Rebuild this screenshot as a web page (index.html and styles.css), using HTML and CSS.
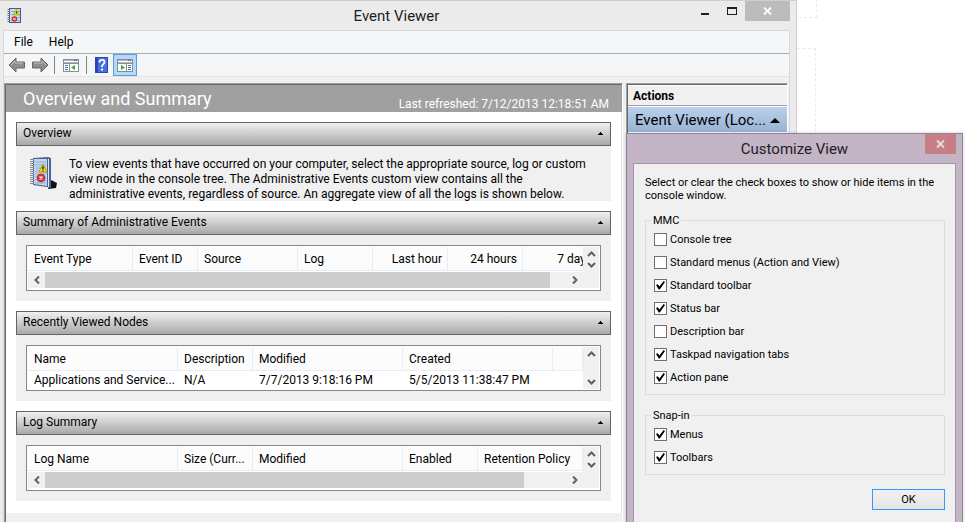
FILE: index.html
```html
<!DOCTYPE html>
<html lang="en">
<head>
    <meta charset="UTF-8">
    <meta name="viewport" content="width=device-width, initial-scale=1.0">
    <title>Event Viewer</title>
    <link rel="stylesheet" href="styles.css">
</head>
<body>
    <!-- Shared icons -->
    <svg class="sprite" aria-hidden="true">
        <symbol id="collapse" viewBox="0 0 7 4"><path d="M3 0h1v1h1v1h1v1H1V2h1V1h1z"/></symbol>
        <symbol id="up" viewBox="0 0 9 6"><path d="M1 5l3.500-3.500L8 5" fill="none" stroke="#606060" stroke-width="2"/></symbol>
        <symbol id="down" viewBox="0 0 9 6"><path d="M1 1l3.500 3.500L8 1" fill="none" stroke="#606060" stroke-width="2"/></symbol>
        <symbol id="left" viewBox="0 0 6 8"><path d="M5 .5L1.500 4 5 7.500" fill="none" stroke="#606060" stroke-width="2"/></symbol>
        <symbol id="right" viewBox="0 0 6 8"><path d="M1 .5L4.500 4 1 7.500" fill="none" stroke="#606060" stroke-width="2"/></symbol>
        <symbol id="close" viewBox="0 0 9 8"><path d="M1 .5l7 7M8 .5l-7 7" fill="none" stroke="currentColor" stroke-width="1.800"/></symbol>
    </svg>

    <div class="desktop">
        <div class="backdrop-box"></div>
        <div class="backdrop-box backdrop-tall"></div>

        <!-- Event Viewer window -->
        <div class="window">
            <div class="title-bar">
                <svg class="app-icon" width="16" height="16" viewBox="0 0 16 16">
                    <rect x="2.500" y=".5" width="11" height="14" fill="#c3dcf5" stroke="#3d5a8c"/>
                    <path d="M4 3.500h9M4 6.500h9M4 9.500h9M4 12.500h9" stroke="#8fb0da"/>
                    <path d="M1.500 1v14" stroke="#777" stroke-width="2" stroke-dasharray="1 1"/>
                    <path d="M9.500 1.500l3 5.500h-6z" fill="#f5d90a" stroke="#a89500" stroke-width=".7"/>
                    <path d="M9.500 3.500v2" stroke="#222"/>
                    <circle cx="7.500" cy="11" r="2.800" fill="#d9302c"/>
                    <path d="M6.500 10l2 2m0-2l-2 2" stroke="#fff" stroke-width=".9"/>
                </svg>
                <h1 class="window-title">Event Viewer</h1>
                <div class="window-controls">
                    <button class="control" aria-label="Minimize"><svg width="8" height="8"><path d="M0 6h8v2H0z" fill="#1e1e1e"/></svg></button>
                    <button class="control" aria-label="Maximize"><svg width="10" height="8"><path d="M0 0h10v8H0zM1 2v5h8V2z" fill="#1e1e1e" fill-rule="evenodd"/></svg></button>
                    <button class="control control-close" aria-label="Close"><svg width="9" height="8"><use href="#close"/></svg></button>
                </div>
            </div>

            <div class="client">
                <div class="menu-bar">
                    <button class="menu-item">File</button>
                    <button class="menu-item">Help</button>
                </div>
                <div class="toolbar">
                    <button class="tool" aria-label="Back">
                        <svg width="18" height="16" viewBox="0 0 18 16"><path d="M1 8l7-7v4h8.500v6H8v4z" fill="#8e8e8e" stroke="#666"/><path d="M3 8l4-4v2h8" fill="none" stroke="#bdbdbd"/></svg>
                    </button>
                    <button class="tool" aria-label="Forward">
                        <svg width="18" height="16" viewBox="0 0 18 16"><path d="M17 8l-7-7v4H1.500v6H10v4z" fill="#8e8e8e" stroke="#666"/><path d="M3 6h8V4l4 4" fill="none" stroke="#bdbdbd"/></svg>
                    </button>
                    <span class="separator"></span>
                    <button class="tool tool-wide" aria-label="Show console tree">
                        <svg width="16" height="13" viewBox="0 0 16 13">
                            <rect x=".5" y=".5" width="15" height="12" fill="#fff" stroke="#878c96"/>
                            <path d="M1 1.500h14M1 3.500h14" stroke="#b4b9c1"/>
                            <path d="M11 1.500h1m1 0h1" stroke="#4d5562"/>
                            <path d="M1 4.500h14M6.500 5v8" stroke="#878c96"/>
                            <path d="M2 6.500h3M2 8.500h3M2 10.500h3" stroke="#4b6fa8"/>
                            <path d="M12 6v5L8 8.500z" fill="#35b51c"/>
                        </svg>
                    </button>
                    <span class="separator"></span>
                    <button class="tool tool-wide" aria-label="Help">
                        <svg width="13" height="16" viewBox="0 0 13 16">
                            <rect width="13" height="16" fill="#2846b4"/>
                            <rect x="3" y="1" width="9" height="14" fill="#4a6fe0"/>
                            <path d="M4.500 5.500V4.500Q5 2.800 7 2.800 9.500 2.800 9.500 5 9.500 6.500 8 7.400 7 8 7 10" fill="none" stroke="#fff" stroke-width="1.800"/>
                            <path d="M6 11.500h2v2H6z" fill="#fff"/>
                        </svg>
                    </button>
                    <button class="tool tool-active" aria-label="Show action pane" aria-pressed="true">
                        <svg width="16" height="13" viewBox="0 0 16 13">
                            <rect x=".5" y=".5" width="15" height="12" fill="#fff" stroke="#878c96"/>
                            <path d="M1 1.500h14M1 3.500h14" stroke="#b4b9c1"/>
                            <path d="M11 1.500h1m1 0h1" stroke="#4d5562"/>
                            <path d="M1 4.500h14M9.500 5v8" stroke="#878c96"/>
                            <path d="M11 6.500h3M11 8.500h3M11 10.500h3" stroke="#4b6fa8"/>
                            <path d="M4 6v5l4-2.500z" fill="#35b51c"/>
                        </svg>
                    </button>
                </div>

                <div class="panes">
                    <main class="pane summary-pane">
                        <div class="summary-header">
                            <h2 class="summary-title">Overview and Summary</h2>
                            <span class="refreshed">Last refreshed: 7/12/2013 12:18:51 AM</span>
                        </div>
                        <div class="sections">
                            <section class="section">
                                <div class="section-header">
                                    <h3 class="section-title">Overview</h3>
                                    <button class="collapse" aria-label="Collapse Overview"><svg width="7" height="4"><use href="#collapse"/></svg></button>
                                </div>
                                <div class="overview">
                                    <svg class="overview-icon" width="28" height="32" viewBox="0 0 28 32">
                                        <path d="M21 23l6 3-1 5-8 1z" fill="#111"/>
                                        <path d="M3 1l15-1 3 1v30l-4-1L3 28z" fill="#4b6597"/>
                                        <path d="M4 2h13v27L4 27z" fill="#bed6ef"/>
                                        <path d="M5 5h11M5 8h11M5 11h11M5 14h11M5 17h11M5 20h11M5 23h11M5 26h11" stroke="#8facd3"/>
                                        <path d="M18.500 2v28" stroke="#dce8f5"/>
                                        <path d="M2 2v26" stroke="#888" stroke-width="4" stroke-dasharray="1 1"/>
                                        <path d="M13 7l4 8H9z" fill="#ffe11a" stroke="#b39c00"/>
                                        <path d="M13 9.500v3m0 1v1" stroke="#111" stroke-width="1.400"/>
                                        <circle cx="11" cy="21" r="4" fill="#d92f35" stroke="#a51d22" stroke-width=".5"/>
                                        <path d="M9.500 19.500l3 3m0-3l-3 3" stroke="#fff" stroke-width="1.300"/>
                                    </svg>
                                    <p class="overview-text">To view events that have occurred on your computer, select the appropriate source, log or custom<br>view node in the console tree. The Administrative Events custom view contains all the<br>administrative events, regardless of source. An aggregate view of all the logs is shown below.</p>
                                </div>
                            </section>

                            <section class="section">
                                <div class="section-header">
                                    <h3 class="section-title">Summary of Administrative Events</h3>
                                    <button class="collapse" aria-label="Collapse Summary"><svg width="7" height="4"><use href="#collapse"/></svg></button>
                                </div>
                                <div class="section-body">
                                    <div class="list-view">
                                        <div class="list-rows">
                                            <table class="list">
                                                <colgroup><col class="col-type"><col class="col-id"><col class="col-source"><col class="col-small"><col class="col-small"><col class="col-small"><col class="col-small"></colgroup>
                                                <thead><tr><th>Event Type</th><th>Event ID</th><th>Source</th><th>Log</th><th class="number">Last hour</th><th class="number">24 hours</th><th class="number">7 days</th></tr></thead>
                                            </table>
                                        </div>
                                        <div class="scroll-y">
                                            <button class="arrow" aria-label="Scroll up"><svg width="9" height="6"><use href="#up"/></svg></button>
                                            <button class="arrow" aria-label="Scroll down"><svg width="9" height="6"><use href="#down"/></svg></button>
                                        </div>
                                        <div class="scroll-x">
                                            <button class="arrow" aria-label="Scroll left"><svg width="6" height="8"><use href="#left"/></svg></button>
                                            <div class="track"><div class="thumb thumb-events"></div></div>
                                            <button class="arrow" aria-label="Scroll right"><svg width="6" height="8"><use href="#right"/></svg></button>
                                        </div>
                                    </div>
                                </div>
                            </section>

                            <section class="section">
                                <div class="section-header">
                                    <h3 class="section-title">Recently Viewed Nodes</h3>
                                    <button class="collapse" aria-label="Collapse Recently Viewed Nodes"><svg width="7" height="4"><use href="#collapse"/></svg></button>
                                </div>
                                <div class="section-body">
                                    <div class="list-view">
                                        <div class="list-rows">
                                            <table class="list">
                                                <colgroup><col class="col-large"><col class="col-small"><col class="col-large"><col class="col-large"><col></colgroup>
                                                <thead><tr><th>Name</th><th>Description</th><th>Modified</th><th>Created</th><th></th></tr></thead>
                                                <tbody><tr><td>Applications and Service...</td><td>N/A</td><td>7/7/2013 9:18:16 PM</td><td>5/5/2013 11:38:47 PM</td><td></td></tr></tbody>
                                            </table>
                                        </div>
                                        <div class="scroll-y">
                                            <button class="arrow" aria-label="Scroll up"><svg width="9" height="6"><use href="#up"/></svg></button>
                                            <button class="arrow" aria-label="Scroll down"><svg width="9" height="6"><use href="#down"/></svg></button>
                                        </div>
                                    </div>
                                </div>
                            </section>

                            <section class="section">
                                <div class="section-header">
                                    <h3 class="section-title">Log Summary</h3>
                                    <button class="collapse" aria-label="Collapse Log Summary"><svg width="7" height="4"><use href="#collapse"/></svg></button>
                                </div>
                                <div class="section-body">
                                    <div class="list-view">
                                        <div class="list-rows">
                                            <table class="list">
                                                <colgroup><col class="col-large"><col class="col-small"><col class="col-large"><col class="col-small"><col></colgroup>
                                                <thead><tr><th>Log Name</th><th>Size (Curr...</th><th>Modified</th><th>Enabled</th><th>Retention Policy</th></tr></thead>
                                            </table>
                                        </div>
                                        <div class="scroll-y">
                                            <button class="arrow" aria-label="Scroll up"><svg width="9" height="6"><use href="#up"/></svg></button>
                                            <button class="arrow" aria-label="Scroll down"><svg width="9" height="6"><use href="#down"/></svg></button>
                                        </div>
                                        <div class="scroll-x">
                                            <button class="arrow" aria-label="Scroll left"><svg width="6" height="8"><use href="#left"/></svg></button>
                                            <div class="track"><div class="thumb thumb-logs"></div></div>
                                            <button class="arrow" aria-label="Scroll right"><svg width="6" height="8"><use href="#right"/></svg></button>
                                        </div>
                                    </div>
                                </div>
                            </section>
                        </div>
                    </main>

                    <aside class="pane actions-pane">
                        <h2 class="actions-title">Actions</h2>
                        <button class="actions-group">
                            <span class="actions-name">Event Viewer (Loc...</span>
                            <svg width="10" height="5"><path d="M5 0l5 5H0z"/></svg>
                        </button>
                    </aside>
                </div>
            </div>
        </div>

        <!-- Customize View dialog -->
        <div class="dialog" role="dialog" aria-labelledby="dialogTitle">
            <div class="dialog-bar">
                <h2 class="window-title" id="dialogTitle">Customize View</h2>
                <button class="dialog-close" aria-label="Close"><svg width="9" height="8"><use href="#close"/></svg></button>
            </div>
            <form class="dialog-body">
                <p class="dialog-text">Select or clear the check boxes to show or hide items in the<br>console window.</p>
                <fieldset class="group">
                    <legend>MMC</legend>
                    <label class="option"><input type="checkbox">Console tree</label>
                    <label class="option"><input type="checkbox">Standard menus (Action and View)</label>
                    <label class="option"><input type="checkbox" checked>Standard toolbar</label>
                    <label class="option"><input type="checkbox" checked>Status bar</label>
                    <label class="option"><input type="checkbox">Description bar</label>
                    <label class="option"><input type="checkbox" checked>Taskpad navigation tabs</label>
                    <label class="option"><input type="checkbox" checked>Action pane</label>
                </fieldset>
                <fieldset class="group">
                    <legend>Snap-in</legend>
                    <label class="option"><input type="checkbox" checked>Menus</label>
                    <label class="option"><input type="checkbox" checked>Toolbars</label>
                </fieldset>
                <button type="button" class="ok-button">OK</button>
            </form>
        </div>
    </div>
</body>
</html>
```

FILE: styles.css
```css
* {
    box-sizing: border-box;
}

body {
    margin: 0;
    background-color: white;
    color: black;
    font-family: Roboto, "Open Sans", sans-serif;
    font-size: 12px;
    line-height: 15px;
}

h1, h2, h3, p {
    margin: 0;
    font-size: inherit;
    font-weight: normal;
}

button {
    padding: 0;
    border: none;
    background: none;
    color: inherit;
    font: inherit;
}

svg {
    display: block;
    flex: none;
}

.sprite {
    position: absolute;
    width: 0;
    height: 0;
}

.desktop {
    position: relative;
    height: 100vh;
    overflow: hidden;
}

/* Faint dashed outlines behind the windows */
.backdrop-box {
    position: absolute;
    top: -1px;
    right: 148px;
    width: 60px;
    height: 19px;
    border: 1px dashed #ebebeb;
}

.backdrop-tall {
    top: 48px;
    right: 149px;
    height: 200px;
}

/* Main window */
.window {
    position: absolute;
    top: 0;
    bottom: 0;
    left: 0;
    right: 168px;
    display: flex;
    flex-direction: column;
    padding: 0 6px 0 3px;
    border-top: 1px solid #cfcfcf;
    border-right: 1px solid #cfcfcf;
    background-color: #ebebeb;
}

.title-bar {
    display: grid;
    grid-template-columns: 100px 1fr 100px;
    height: 29px;
}

.app-icon {
    margin: 7px 0 0 4px;
}

.window-title {
    color: #1e1e1e;
    font-size: 15px;
    line-height: 31px;
    text-align: center;
}

.window-controls {
    display: flex;
    justify-content: flex-end;
    height: 20px;
}

.control {
    display: flex;
    flex: 0 0 27px;
    align-items: center;
    justify-content: center;
}

.control-close {
    flex-basis: 45px;
    background-color: #bcbcbc;
    color: white;
}

.client {
    display: flex;
    flex: 1;
    flex-direction: column;
    border: 1px solid #d9d9d9;
    border-bottom: none;
    background-color: #f0f0f0;
}

.menu-bar {
    display: flex;
    gap: 16px;
    height: 23px;
    padding: 0 10px;
    border-bottom: 1px solid #a9adb0;
    background-color: #f5f6f7;
}

.toolbar {
    display: flex;
    align-items: center;
    gap: 5px;
    height: 23px;
    padding: 0 4px;
    border-bottom: 1px solid #e3e3e3;
    background-color: #f5f6f7;
}

.tool-wide {
    padding: 0 2px 0 3px;
}

.tool-active {
    padding: 4px 3px 3px;
    border: 1px solid #569de5;
    background-color: #b8d8f9;
}

.tool-wide + .tool-active {
    margin-left: -2px;
}

.separator {
    width: 1px;
    height: 18px;
    background-color: #858585;
}

.panes {
    display: flex;
    flex: 1;
    gap: 3px;
    padding: 6px 1px 0 0;
}

.pane {
    border-top: 1px solid #a0a0a0;
    border-left: 1px solid #a0a0a0;
    border-right: 1px solid white;
    box-shadow: inset 1px 1px #696969;
    padding: 1px 0 0 1px;
}

/* Summary pane */
.summary-pane {
    flex: 1;
    min-width: 0;
}

.summary-header {
    display: flex;
    align-items: flex-end;
    justify-content: space-between;
    height: 27px;
    padding: 0 13px 0 17px;
    background-color: #a0a0a0;
    color: white;
}

.summary-title {
    font-size: 18px;
    line-height: 27px;
}

.sections {
    display: flex;
    flex-direction: column;
    gap: 10px;
    padding: 10px 10px 12px;
    border-right: 1px solid #e3e3e3;
    background-color: white;
}

.section {
    background-color: #f0f0f0;
}

.section-header {
    display: flex;
    justify-content: space-between;
    height: 24px;
    padding: 0 6px;
    border: 1px solid #646464;
    background-image: linear-gradient(#f0f0f0, #a8a8a8);
}

.section-title {
    line-height: 21px;
}

.overview {
    display: flex;
    gap: 11px;
    height: 55px;
    padding: 11px 10px 0 14px;
}

.overview-text {
    white-space: nowrap;
}

.section-body {
    padding: 10px;
}

.list-view {
    display: grid;
    grid-template-columns: minmax(0, 1fr) 16px;
    height: 46px;
    padding: 1px;
    border: 1px solid #828790;
    background-color: white;
}

.list-rows {
    overflow: hidden;
}

.list {
    width: 100%;
    table-layout: fixed;
    border-collapse: separate;
    border-spacing: 0;
}

.list th, .list td {
    overflow: hidden;
    padding: 1px 0 0 6px;
    font-weight: normal;
    text-align: left;
    white-space: nowrap;
}

.list th {
    height: 24px;
    border-right: 1px solid #e5edfa;
    border-bottom: 1px solid #e5edfa;
    background-color: #fcfcfc;
}

.list td {
    height: 18px;
}

.list .number {
    padding-right: 5px;
    text-align: right;
}

.col-type {
    width: 105px;
}

.col-id {
    width: 65px;
}

.col-source {
    width: 100px;
}

.col-small {
    width: 75px;
}

.col-large {
    width: 150px;
}

.scroll-y {
    display: flex;
    flex-direction: column;
    justify-content: space-between;
    padding: 4px 0;
    background-color: #f0f0f0;
}

.scroll-x {
    display: flex;
    grid-column: 1 / -1;
    height: 16px;
    background-color: #f0f0f0;
}

.arrow {
    display: flex;
    flex: none;
    align-items: center;
    justify-content: center;
}

.scroll-x .arrow {
    width: 17px;
}

.scroll-x .arrow:last-child {
    margin-right: 16px;
}

.track {
    flex: 1;
}

.thumb {
    height: 100%;
    background-color: #cdcdcd;
}

.thumb-events {
    width: 97%;
}

.thumb-logs {
    width: 92%;
}

/* Actions pane */
.actions-pane {
    flex: 0 0 162px;
}

.actions-title {
    height: 21px;
    padding-left: 5px;
    border-top: 1px solid white;
    border-bottom: 1px solid #a0a0a0;
    font-weight: bold;
    line-height: 20px;
}

.actions-group {
    display: flex;
    align-items: center;
    justify-content: space-between;
    width: 100%;
    height: 27px;
    padding: 2px 7px 0;
    border-top: 1px solid white;
    border-bottom: 1px solid white;
    background-image: linear-gradient(#b9d1ea, #98b2d2);
}

.actions-name {
    font-size: 15px;
}

/* Dialog */
.dialog {
    position: absolute;
    top: 133px;
    right: 2px;
    bottom: -20px;
    display: flex;
    flex-direction: column;
    width: 337px;
    padding: 0 6px;
    border: 1px solid #8f8496;
    background-color: #c3b4c6;
    box-shadow: 0 0 3px rgba(0, 0, 0, 0.2);
}

.dialog-bar {
    position: relative;
    height: 29px;
}

.dialog-close {
    position: absolute;
    top: 0;
    right: 0;
    display: flex;
    align-items: center;
    justify-content: center;
    width: 31px;
    height: 20px;
    background-color: #c77f86;
    color: #ecdce2;
}

.dialog-body {
    display: flex;
    flex: 1;
    flex-direction: column;
    padding: 12px 10px 0 11px;
    border: 1px solid #a094a5;
    background-color: #f0f0f0;
    font-size: 11px;
    line-height: 13px;
}

.dialog-text {
    margin-bottom: 12px;
    white-space: nowrap;
}

.group {
    min-width: 0;
    margin: 0 0 14px;
    padding: 1px 8px 5px;
    border: 1px solid #dcdcdc;
}

.group legend {
    padding: 0 2px;
    margin-left: -3px;
}

.option {
    display: flex;
    align-items: center;
    gap: 3px;
    height: 23px;
}

.option input {
    appearance: none;
    display: grid;
    place-items: center;
    width: 13px;
    height: 13px;
    margin: 0;
    border: 1px solid #707070;
    background-color: white;
}

.option input:checked::before {
    content: "";
    width: 9px;
    height: 9px;
    background-color: black;
    clip-path: polygon(0 45%, 20% 35%, 38% 60%, 85% 0, 100% 12%, 42% 95%, 30% 95%);
}

.ok-button {
    align-self: flex-end;
    width: 73px;
    height: 21px;
    border: 1px solid #3399ff;
    background-image: linear-gradient(#f0f0f0, #e5e5e5);
}
```
